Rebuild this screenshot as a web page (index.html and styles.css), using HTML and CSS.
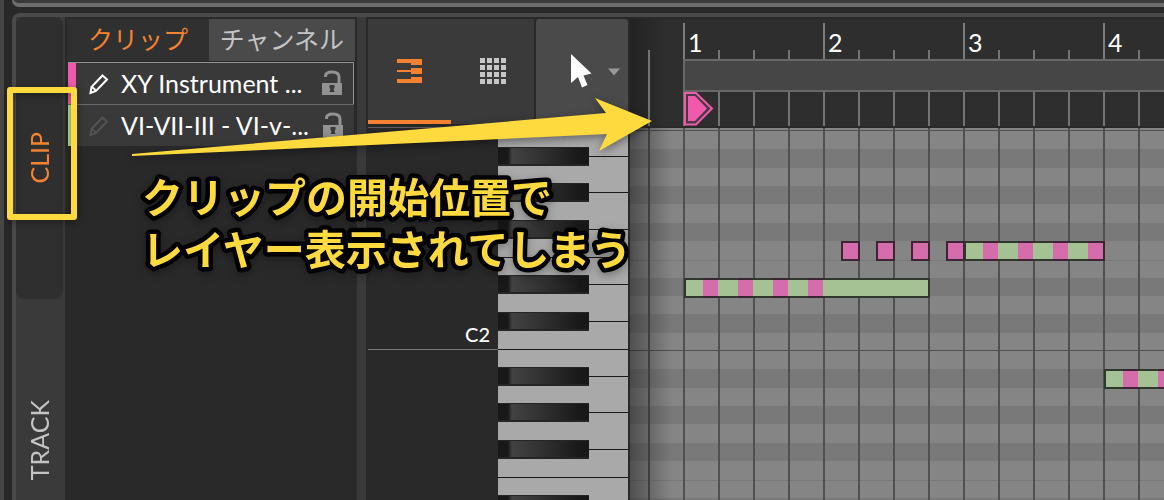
FILE: index.html
```html
<!DOCTYPE html>
<html lang="ja">
<head>
<meta charset="utf-8">
<meta name="viewport" content="width=device-width, initial-scale=1">
<title>Clip layers</title>
<link rel="stylesheet" href="styles.css">
</head>
<body>
<div class="app">
  <div class="upper-panel"></div>
  <main class="editor">
    <nav class="side">
      <button class="side-tab side-tab-on" type="button"><span>CLIP</span></button>
      <button class="side-tab" type="button"><span>TRACK</span></button>
    </nav>

    <section class="layers">
      <div class="tabs">
        <button class="tab tab-on" type="button">クリップ</button>
        <button class="tab" type="button">チャンネル</button>
      </div>
      <div class="layer layer-on">
        <i class="swatch swatch-pink"></i>
        <button class="icon-btn" type="button" aria-label="Edit XY Instrument"><svg class="pencil" width="20" height="22" viewBox="0 0 20 22"><path d="M1.500 20 L2.500 14 L13.500 2.500 L18 6.500 L7 18 Z M3 14 L7 17.500"/></svg></button>
        <span class="layer-name">XY Instrument ...</span>
        <button class="icon-btn" type="button" aria-label="Lock XY Instrument"><svg class="lock" width="22" height="28" viewBox="0 0 22 28"><path class="shackle" d="M4.500 7V6Q4.500 2 11 2Q18 2 18 7V14"/><path class="lock-body" fill-rule="evenodd" d="M1 13H21V25H1ZM8.500 15V18L9.500 19L8.500 22H13.500L12.500 19L13.500 18V15Z"/></svg></button>
      </div>
      <div class="layer">
        <i class="swatch swatch-green"></i>
        <button class="icon-btn" type="button" aria-label="Edit VI-VII-III"><svg class="pencil pencil-off" width="20" height="22" viewBox="0 0 20 22"><path d="M1.500 20 L2.500 14 L13.500 2.500 L18 6.500 L7 18 Z M3 14 L7 17.500"/></svg></button>
        <span class="layer-name">VI-VII-III - VI-v-...</span>
        <button class="icon-btn" type="button" aria-label="Lock VI-VII-III"><svg class="lock" width="22" height="28" viewBox="0 0 22 28"><path class="shackle" d="M4.500 7V6Q4.500 2 11 2Q18 2 18 7V14"/><path class="lock-body" fill-rule="evenodd" d="M1 13H21V25H1ZM8.500 15V18L9.500 19L8.500 22H13.500L12.500 19L13.500 18V15Z"/></svg></button>
      </div>
    </section>

    <div class="splitter"></div>

    <section class="keys-column">
      <div class="toolbar">
        <div class="modes">
          <button class="mode mode-on" type="button" aria-label="Piano view"><svg width="25" height="24" viewBox="0 0 25 24" fill="#f58230"><path d="M0 0H25V6H14V4H0ZM0 11H14V9H25V15H14V13H0ZM0 20H14V18H25V24H0Z"/></svg></button>
          <button class="mode" type="button" aria-label="Drum view"><svg width="26" height="26" viewBox="0 0 26 26"><defs><pattern id="pads" width="7" height="7" patternUnits="userSpaceOnUse"><path d="M0 0H5V5H0Z" fill="#c6c6c6"/></pattern></defs><path d="M0 0H26V26H0Z" fill="url(#pads)"/></svg></button>
        </div>
        <button class="tool" type="button" aria-label="Pointer tool"><svg width="22" height="36" viewBox="0 0 22 36"><path fill="#fff" d="M1 0L21.500 19.500L13.500 21.500L17.500 31L12 33.500L8 23L1 29Z"/></svg><svg width="12" height="8" viewBox="0 0 12 8"><path fill="#999" d="M0 0.500H12L6 7.500Z"/></svg></button>
      </div>
      <div class="keyboard">
        <div class="labels"><span class="octave-label">C2</span></div>
        <div class="keys">
          <div class="octave">
            <i class="white"></i><i class="white"></i><i class="white"></i><i class="white"></i><i class="white"></i><i class="white"></i><i class="white"></i>
            <div class="blacks"><i class="black"></i><i class="black"></i><i class="black"></i><i class="black"></i><i class="black"></i></div>
          </div>
          <div class="octave">
            <i class="white"></i><i class="white"></i><i class="white"></i><i class="white"></i><i class="white"></i><i class="white"></i><i class="white"></i>
            <div class="blacks"><i class="black"></i><i class="black"></i><i class="black"></i><i class="black"></i><i class="black"></i></div>
          </div>
        </div>
      </div>
    </section>

    <section class="timeline">
      <div class="ruler">
        <div class="bars"><span class="bar">1</span><span class="bar">2</span><span class="bar">3</span><span class="bar">4</span></div>
        <div class="loop-row"><div class="loop"></div></div>
        <div class="markers"><svg width="30" height="34" viewBox="0 0 30 34"><path d="M1 1H12L28 16.500L12 32.500H1Z" fill="#4a3a43" stroke="#f05aab" stroke-width="2"/><path d="M4 4H11L23 16.500L11 29H4Z" fill="#f05aab"/></svg></div>
      </div>
      <div class="roll">
        <div class="pitches"><i></i><i></i><i></i><i></i><i></i><i></i><i></i><i></i><i></i><i></i><i></i><i></i></div>
        <div class="pitches"><i></i><i></i><i></i><i></i><i></i><i></i><i></i><i></i><i></i><i></i><i></i><i></i></div>
        <div class="beats"></div>
        <div class="note" style="left:54px;top:150px"><i class="g"></i><i class="p"></i><i class="g"></i><i class="p"></i><i class="g"></i><i class="p"></i><i class="g"></i><i class="p"></i><i class="g tail"></i></div>
        <div class="note" style="left:211px;top:113px"><i class="p solo"></i></div>
        <div class="note" style="left:246px;top:113px"><i class="p solo"></i></div>
        <div class="note" style="left:281px;top:113px"><i class="p solo"></i></div>
        <div class="note" style="left:316px;top:113px"><i class="p solo"></i></div>
        <div class="note" style="left:334px;top:113px"><i class="g"></i><i class="p"></i><i class="g"></i><i class="p"></i><i class="g"></i><i class="p"></i><i class="g"></i><i class="p last"></i></div>
        <div class="note" style="left:474px;top:241px"><i class="g"></i><i class="p"></i><i class="g"></i><i class="p"></i><i class="g"></i><i class="p"></i><i class="g"></i><i class="p last"></i></div>
        <div class="shade"></div>
      </div>
    </section>
  </main>

  <div class="highlight"></div>
  <svg class="arrow" width="530" height="64" viewBox="0 0 530 64"><path fill="#ffda3e" d="M2 60L476 19L465 4L522 27L469 57L477 40L2 62Z"/></svg>
  <svg class="caption" width="520" height="120" viewBox="0 0 520 120"><text x="10" y="46">クリップの開始位置で</text><text x="10" y="98">レイヤー表示されてしまう</text></svg>
</div>
</body>
</html>
```
FILE: styles.css
```css
* { box-sizing: border-box; }
body {
  margin: 0;
  background: #292929;
  color: #fff;
  font-family: Lato, "Noto Sans CJK JP", sans-serif;
}
button {
  margin: 0;
  padding: 0;
  border: 0;
  background: none;
  color: inherit;
  font: inherit;
}
svg { display: block; flex: none; }
i { display: block; }

.app {
  position: relative;
  display: flex;
  flex-direction: column;
  gap: 6px;
  height: 100vh;
  padding-left: 8px;
  overflow: hidden;
  border-left: 4px solid #464646;
}
.app::before {
  content: "";
  position: absolute;
  left: -4px;
  top: 0;
  bottom: 0;
  width: 2px;
  background: #0c0a22;
}
.upper-panel {
  flex: none;
  height: 7px;
  background: #3a3a3a;
  border: solid #6d6d6d;
  border-width: 0 0 4px 2px;
  border-bottom-left-radius: 7px;
}
.editor {
  display: flex;
  flex: 1;
  min-height: 0;
  border: solid #4a4a4a;
  border-width: 4px 0 0 4px;
  border-top-left-radius: 8px;
}

.side {
  flex: none;
  width: 49px;
  padding-right: 2px;
  background: #3a3a3a;
}
.side-tab {
  display: flex;
  align-items: center;
  justify-content: center;
  width: 100%;
  height: 282px;
  padding-right: 2px;
  border-radius: 8px;
  color: #c4c4c4;
  font-size: 25px;
}
.side-tab span { writing-mode: vertical-rl; transform: rotate(180deg); }
.side-tab-on { background: #2f2f2f; color: #f58230; }

.layers {
  flex: none;
  width: 292px;
  padding: 2px 2px 0;
}
.tabs {
  display: flex;
  height: 42px;
  margin-bottom: 1px;
}
.tab {
  flex: 1;
  padding-bottom: 2px;
  background: #4a4a4a;
  color: #c4c4c4;
  font-size: 25px;
  line-height: 40px;
}
.tab-on { flex: none; width: 142px; background: #303030; color: #f58230; }
.layer {
  display: flex;
  align-items: center;
  height: 42px;
  margin: 0 1px;
  padding-right: 10px;
  border-top: 1px solid #686868;
  background: #393939;
  font-size: 25px;
}
.layer-on { border: solid #929292; border-width: 1px 1px 0 0; }
.swatch { align-self: stretch; width: 8px; margin-right: 13px; }
.swatch-pink { background: #f05aab; }
.swatch-green { background: #abdc8c; }
.layer-name { flex: 1; padding: 0 0 2px 12px; white-space: nowrap; }
.pencil path { fill: none; stroke: #fff; stroke-width: 2; }
.pencil-off path { stroke: #535353; }
.shackle { fill: none; stroke: #929292; stroke-width: 3; }
.lock-body { fill: #929292; }

.splitter { flex: none; width: 9px; background: #3a3a3a; }

.keys-column {
  display: flex;
  flex-direction: column;
  flex: none;
  width: 264px;
  padding: 2px 2px 0;
}
.toolbar { display: flex; flex: none; gap: 2px; height: 105px; }
.modes { display: flex; width: 166px; background: #3a3a3a; }
.mode {
  display: flex;
  flex: 1;
  align-items: center;
  justify-content: center;
  border: solid transparent;
  border-width: 3px 0 4px;
}
.mode-on { border-bottom-color: #f58230; }
.tool {
  display: flex;
  flex: 1;
  align-items: center;
  justify-content: center;
  gap: 16px;
  padding-left: 26px;
  border-radius: 3px 3px 0 0;
  background: #4a4a4a;
}
.keyboard { display: flex; flex: none; margin-top: 3px; border-top: 1px solid #606060; }
.labels { width: 130px; }
.octave-label {
  display: flex;
  align-items: flex-end;
  justify-content: flex-end;
  height: 222px;
  padding: 0 8px 3px 0;
  border-bottom: 1px solid #777;
  font-size: 20px;
  font-weight: 500;
}
.keys { flex: 1; background: #a9a9a9; padding-top: 2px; }
.octave {
  position: relative;
  display: grid;
  grid-template-rows: 27px 36px 37px 28px 27px 37px 28px;
}
.white { border-bottom: 1px solid #191919; }
.blacks {
  position: absolute;
  top: 17px;
  left: 0;
  width: 91px;
  display: grid;
  grid-template-rows: 36px 37px 55px 37px 19px;
}
.black {
  height: 19px;
  border: solid #252525;
  border-width: 1px 0 2px;
  background: linear-gradient(90deg, #181818 10px, #424242 14px, #303030 45px, #181818 82px);
}

.timeline {
  display: flex;
  flex-direction: column;
  flex: 1;
  min-width: 0;
  padding-top: 2px;
}
.ruler {
  flex: none;
  height: 109px;
  border-bottom: 2px solid #292929;
  background: linear-gradient(90deg, #222, #2e2e2e 36px);
}
.bars {
  display: flex;
  height: 40px;
  padding: 4px 0 0 53px;
  background: repeating-linear-gradient(90deg, #747474 0 2px, transparent 2px 35px) 18px 31px / 100% 9px no-repeat;
}
.bar {
  flex: none;
  width: 140px;
  padding-left: 3px;
  border-left: 2px solid #7c7c7c;
  font-size: 25px;
  line-height: 38px;
}
.loop-row {
  padding-left: 53px;
  background: linear-gradient(#747474, #747474) 18px 0 / 2px 100% no-repeat;
}
.loop {
  height: 33px;
  border: 2px solid #686868;
  border-right: 0;
  background: #464646;
}
.markers {
  height: 34px;
  padding-left: 54px;
  background: repeating-linear-gradient(90deg, #747474 0 2px, transparent 2px 35px) 18px 0 no-repeat;
}
.roll {
  position: relative;
  flex: 1;
  min-height: 0;
  overflow: hidden;
  padding-top: 3px;
  background: #858585;
}
.pitches {
  display: grid;
  grid-template-rows: 18px 19px 18px 18px 19px 18px 19px 18px 18px 18px 19px 17px;
  border-top: 1px solid #505050;
}
.pitches i:nth-child(2),
.pitches i:nth-child(4),
.pitches i:nth-child(6),
.pitches i:nth-child(9),
.pitches i:nth-child(11) { background: #797979; }
.pitches i:nth-child(8) { border-top: 1px solid #797979; }
.roll .pitches:first-child { margin-top: -1px; }
.beats {
  position: absolute;
  inset: 0;
  background: repeating-linear-gradient(90deg, #505050 0 2px, transparent 2px 35px) 18px 0 no-repeat;
}
.shade {
  position: absolute;
  top: 0;
  bottom: 0;
  left: 0;
  width: 42px;
  background: linear-gradient(90deg, rgba(0, 0, 0, 0.4), transparent);
}
.note { position: absolute; display: flex; height: 20px; }
.g, .p { border: solid; border-width: 2px 0; }
.g { width: 20px; background: #a5c294; border-color: #30382b; }
.p { width: 15px; background: #d56dac; border-color: #3c2434; }
.g:first-child { width: 19px; border-left-width: 2px; }
.tail { width: 107px; border-right-width: 2px; }
.last { width: 17px; border-right-width: 2px; }
.solo { width: 19px; border-width: 2px; }

.highlight {
  position: absolute;
  left: 3px;
  top: 87px;
  width: 70px;
  height: 133px;
  border: 6px solid #ffda3e;
  border-radius: 3px;
  filter: drop-shadow(0 2px 4px rgba(0, 0, 0, 0.4));
}
.arrow {
  position: absolute;
  left: 126px;
  top: 94px;
  filter: drop-shadow(0 3px 4px rgba(0, 0, 0, 0.4));
}
.caption {
  position: absolute;
  left: 128px;
  top: 167px;
  overflow: visible;
  fill: #ffda3e;
  stroke: #000;
  stroke-width: 9px;
  stroke-linejoin: round;
  paint-order: stroke fill;
  font-family: "Noto Sans CJK JP", sans-serif;
  font-size: 41px;
  font-weight: 700;
  filter: drop-shadow(0 3px 4px rgba(0, 0, 0, 0.3));
}
```
